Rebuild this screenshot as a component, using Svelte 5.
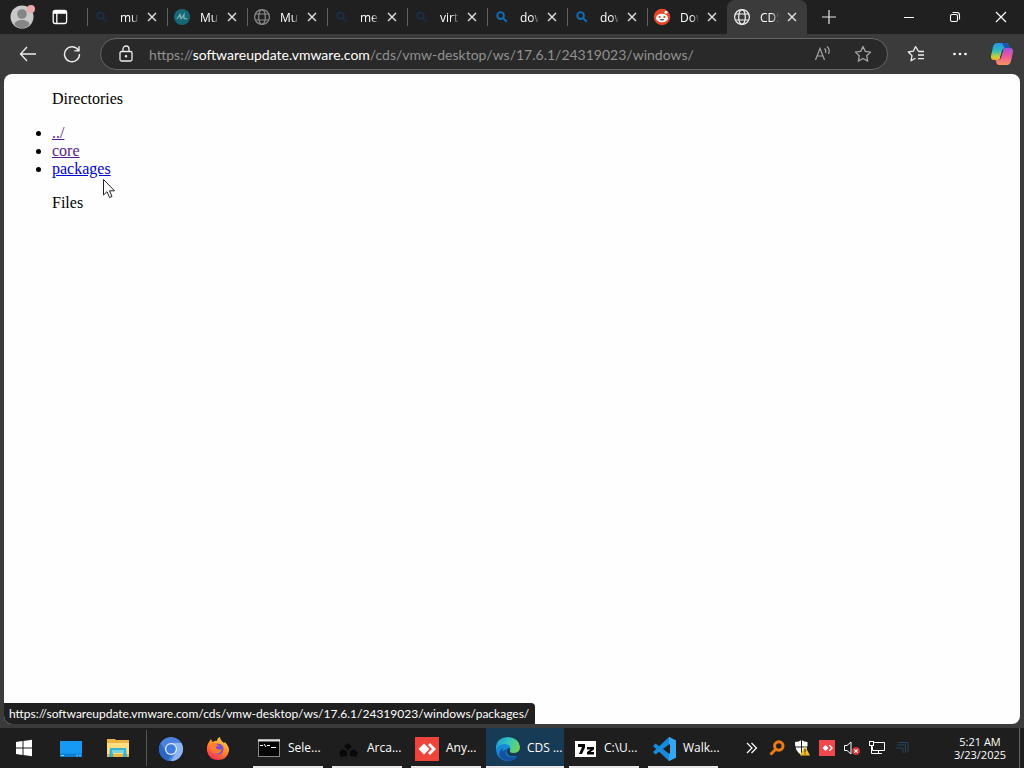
<script>
  const tabs = [
    { icon: 'dim', title: 'mul' },
    { icon: 'arc', title: 'Mul' },
    { icon: 'globe', title: 'Mul' },
    { icon: 'dim', title: 'mer' },
    { icon: 'dim', title: 'virt' },
    { icon: 'search', title: 'dow' },
    { icon: 'search', title: 'dow' },
    { icon: 'reddit', title: 'Dow' },
    { icon: 'globe', title: 'CDS', active: true }
  ];
  const tasks = [
    { icon: 'cmd', title: 'Sele...' },
    { icon: 'arca', title: 'Arca...' },
    { icon: 'any', title: 'Any...' },
    { icon: 'edge', title: 'CDS ...', active: true },
    { icon: 'seven', title: 'C:\\U...' },
    { icon: 'code', title: 'Walk...' }
  ];
  const links = [
    { label: '../', visited: true },
    { label: 'core', visited: true },
    { label: 'packages', visited: false }
  ];
  const url = 'https://softwareupdate.vmware.com/cds/vmw-desktop/ws/17.6.1/24319023/windows/';
</script>

<div class="screen">
  <header class="strip">
    <button class="profile" aria-label="Profile">
      <svg width="26" height="26" viewBox="0 0 26 26">
        <circle cx="13" cy="14" r="11.5" fill="#c9c9c7" />
        <circle cx="13" cy="11" r="4.8" fill="#858585" />
        <path d="M5.5 21.5c0-6 15-6 15 0-4 5-11 5-15 0z" fill="#858585" />
        <circle cx="22" cy="6" r="4" fill="#eea7ac" />
      </svg>
    </button>
    <button class="workspace" aria-label="Tab actions">
      <svg width="16" height="16" viewBox="0 0 16 16" fill="none" stroke="#fff" stroke-width="1.3">
        <rect x="1.2" y="1.5" width="13.4" height="13" rx="2.2" />
        <path d="M1.5 3.3h13" stroke-width="3" /><path d="M4.8 4v10.5" />
      </svg>
    </button>
    <nav class="tabs" aria-label="Tabs">
      {#each tabs as tab}
        <div class="tab" class:active={tab.active}>
          <button class="tab-main">
            <svg class="tab-icon" width="18" height="18" viewBox="0 0 18 18" fill="none">
              {#if tab.icon === 'globe'}
                <g stroke={tab.active ? '#f2f2f2' : '#8b8b8b'} stroke-width="1.2">
                  <circle cx="9" cy="9" r="7.4" /><ellipse cx="9" cy="9" rx="3.3" ry="7.4" />
                  <path d="M2.4 6h13.2M2.4 12h13.2" />
                </g>
              {:else if tab.icon === 'reddit'}
                <circle cx="9" cy="9" r="8.2" fill="#e8482a" />
                <circle cx="13" cy="4.2" r="1.5" fill="#fff" />
                <ellipse cx="9" cy="10" rx="6" ry="4.3" fill="#fff" />
                <circle cx="6.6" cy="9" r="1.1" fill="#d63b21" /><circle cx="11.4" cy="9" r="1.1" fill="#d63b21" />
                <path d="M6.4 11.3q2.6 2.5 5.2 0z" fill="#222" />
              {:else if tab.icon === 'arc'}
                <circle cx="9" cy="9" r="8" fill="#176875" />
                <path d="M4 11l3-4.5 1 4.5M8 11l3-4.5v4l3 .4" stroke="#78b0b5" stroke-width="1.3" />
              {:else}
                <g stroke={tab.icon === 'search' ? '#1268b2' : '#17324c'} stroke-width={tab.icon === 'search' ? 2 : 1.5}>
                  <circle cx="7.6" cy="7.6" r="3.3" /><path d="M10.2 10.2l3.6 3.6" />
                </g>
              {/if}
            </svg>
            <span class="tab-title">{tab.title}</span>
          </button>
          <button class="tab-close" aria-label="Close tab">
            <svg width="10" height="10" viewBox="0 0 10 10" stroke="#e4e4e4" stroke-width="1.4"><path d="M1 1l8 8M9 1l-8 8" /></svg>
          </button>
        </div>
      {/each}
    </nav>
    <button class="new-tab" aria-label="New tab">
      <svg width="14" height="14" viewBox="0 0 14 14" stroke="#e8e8e8" stroke-width="1.2"><path d="M7 0v14M0 7h14" /></svg>
    </button>
    <div class="window-controls">
      <button aria-label="Minimize"><svg width="12" height="12" viewBox="0 0 12 12" stroke="#fff"><path d="M1 6.5h10" /></svg></button>
      <button aria-label="Restore">
        <svg width="12" height="12" viewBox="0 0 12 12" fill="none" stroke="#fff" stroke-width="1.1">
          <rect x="1.5" y="3.5" width="7" height="7" rx="1.5" /><path d="M3.5 1.5H8q2.5 0 2.5 2.5v4.5" />
        </svg>
      </button>
      <button aria-label="Close"><svg width="12" height="12" viewBox="0 0 12 12" stroke="#fff" stroke-width="1.2"><path d="M1 1l10 10M11 1L1 11" /></svg></button>
    </div>
  </header>

  <div class="toolbar">
    <button class="nav-button" aria-label="Back">
      <svg width="18" height="16" viewBox="0 0 18 16" fill="none" stroke="#eee" stroke-width="1.3"><path d="M8 1L1.5 8 8 15M1.5 8H17" /></svg>
    </button>
    <button class="nav-button" aria-label="Refresh">
      <svg width="18" height="18" viewBox="0 0 18 18" fill="none" stroke="#eee" stroke-width="1.4"><path d="M15.5 5.5A7.5 7.5 0 1 0 16.5 9M16 1.2v4.7h-4.7" /></svg>
    </button>
    <div class="address">
      <button class="lock" aria-label="View site information">
        <svg width="16" height="18" viewBox="0 0 16 18" fill="none" stroke="#eee" stroke-width="1.3">
          <rect x="2" y="6.5" width="12" height="9.5" rx="1.5" /><path d="M5 6.5V4a3 3 0 0 1 6 0v2.5" /><circle cx="8" cy="11.2" r=".6" fill="#eee" />
        </svg>
      </button>
      <div class="url-box">
        <input type="text" aria-label="Address and search bar" value={url} spellcheck="false" />
        <div class="url-view" aria-hidden="true">https://<b>softwareupdate.vmware.com</b>/cds/vmw-desktop/ws/17.6.1/24319023/windows/</div>
      </div>
      <button class="address-button" aria-label="Read aloud">
        <svg width="18" height="18" viewBox="0 0 18 18" fill="none" stroke="#a4a4a4" stroke-width="1.2">
          <path d="M1.5 15L6 3.5 10.5 15M3.2 11h5.7M10.5 3.5q2 1.7 1 4.5M13 1.5q3.500 3 1.5 7.5" />
        </svg>
      </button>
      <button class="address-button" aria-label="Add to favorites">
        <svg width="18" height="18" viewBox="0 0 18 18" fill="none" stroke="#a4a4a4" stroke-width="1.3" stroke-linejoin="round">
          <path d="M9 1.5l2.3 4.9 5.3.7-3.9 3.7 1 5.3L9 13.5l-4.7 2.6 1-5.3L1.4 7.1l5.3-.7z" />
        </svg>
      </button>
    </div>
    <div class="tools">
      <button class="nav-button" aria-label="Favorites">
        <svg width="18" height="18" viewBox="0 0 18 18" fill="none" stroke="#eee" stroke-width="1.3" stroke-linejoin="round">
          <path d="M17 6.5h-5.3L8.5 1.7 6.3 6.2 1.3 7l3.7 3.6-1 5.2 4.5-2.5M11 10h6M11 13.7h6" />
        </svg>
      </button>
      <button class="nav-button" aria-label="Settings and more">
        <svg width="16" height="4" viewBox="0 0 16 4" fill="#fff"><circle cx="2.5" cy="2" r="1.3" /><circle cx="8" cy="2" r="1.3" /><circle cx="13.5" cy="2" r="1.3" /></svg>
      </button>
      <button class="nav-button" aria-label="Copilot">
        <svg width="24" height="24" viewBox="0 0 24 24">
          <defs>
            <linearGradient id="cop-a" x1="0" y1="0" x2="0" y2="1"><stop offset="0" stop-color="#2196e8" /><stop offset=".45" stop-color="#30b9bd" /><stop offset=".8" stop-color="#c4cf3f" /><stop offset="1" stop-color="#f2a52e" /></linearGradient>
            <linearGradient id="cop-b" x1="0" y1="0" x2="0" y2="1"><stop offset="0" stop-color="#a052db" /><stop offset=".5" stop-color="#ec5998" /><stop offset="1" stop-color="#fa9461" /></linearGradient>
          </defs>
          <path d="M7 1h9q2 0 2.5 2l1 3h-4q-2 0-2.5 2l-3 9q-.6 1-2.5 1H4q-3.500 0-3-4L3 5q1-4 4-4z" fill="url(#cop-a)" />
          <path d="M12 1h4q2 0 2.5 2l1 3h-5z" fill="#1c55b7" />
          <path d="M15.5 6H20q3.500 0 3 4l-2 9q-1 4-4 4H9q-2 0-2.500-2l-1-3H8q2 0 2.5-1l2.500-9q.7-2 2.500-2z" fill="url(#cop-b)" />
          <path d="M12.5 7.500h1l-2.700 8.500h-1z" fill="#34313b" />
        </svg>
      </button>
    </div>
  </div>

  <div class="frame">
    <main class="page">
      <p>Directories</p>
      <ul>
        {#each links as link}
          <li><a href={'#' + link.label} class:visited={link.visited}>{link.label}</a></li>
        {/each}
      </ul>
      <p>Files</p>
      <svg class="pointer" width="14" height="21" viewBox="0 0 14 21"><path d="M1.5 1.5v15.500l3.500-3.300 2.600 5.800 2.400-1-2.500-5.700h5z" fill="#fff" stroke="#222" /></svg>
    </main>
    <div class="status">https://softwareupdate.vmware.com/cds/vmw-desktop/ws/17.6.1/24319023/windows/packages/</div>
  </div>

  <footer class="taskbar">
    <div class="pinned">
      <button aria-label="Start"><svg width="18" height="18" viewBox="0 0 18 18" fill="#fff"><path d="M1 3l6.500-1v6.500H1zM8.500 1.900L17 .7v7.800H8.500zM1 9.500h6.500V16L1 15zM8.500 9.500H17v7.800l-8.500-1.200z" /></svg></button>
      <button aria-label="Desktop"><svg width="24" height="20" viewBox="0 0 24 20"><rect x="1" y="3" width="22" height="16" fill="#1698f5" /><path d="M1 15.500h22V19H1z" fill="#0b7dd2" /><path d="M2 17.500h3M18 16.500v2M21 16.500v2" stroke="#9edbff" /></svg></button>
      <button aria-label="File Explorer">
        <svg width="24" height="22" viewBox="0 0 24 22"><path d="M1 2h8l1 1h13v17H1z" fill="#ebb445" /><path d="M1 6h22v11H1z" fill="#ffdf80" /><path d="M4 11h16l1 9h-4v-4H7v4H3z" fill="#38b4d0" /><path d="M6 16h12v-3H6z" fill="#7bd4dc" /></svg>
      </button>
      <span class="divider"></span>
      <button aria-label="Chromium">
        <svg width="26" height="26" viewBox="0 0 26 26"><circle cx="13" cy="14" r="12" fill="#4b83de" /><path d="M13 8h10.400A12 12 0 0 1 13 26l5-9z" fill="#8fb5f3" /><path d="M2.600 8L8 17l5 3-3 5.700A12 12 0 0 1 2.600 8z" fill="#2d65c4" /><circle cx="13" cy="14" r="6" fill="#e9f1ff" /><circle cx="13" cy="14" r="4.800" fill="#3e7ce4" /></svg>
      </button>
      <button aria-label="Firefox">
        <svg width="24" height="26" viewBox="0 0 24 26">
          <defs><linearGradient id="fox" x1=".8" y1="0" x2=".3" y2="1"><stop offset="0" stop-color="#ffdc43" /><stop offset=".5" stop-color="#ff8a29" /><stop offset="1" stop-color="#f42c58" /></linearGradient></defs>
          <path d="M3 7l2-3 1.500 3Q10 5 11 6q0-3 3-4 0 3 4 6l1-1q5 6 4 9-2 9-11 9T1 16q-.5-6 2-9z" fill="url(#fox)" />
          <circle cx="12" cy="14" r="5.500" fill="#7650ce" /><path d="M4 9q5-2 9 2-4 0-3 2 2 3 6 1-2 6-8 4-4-3-4-9z" fill="#ff7b2e" />
        </svg>
      </button>
    </div>
    <div class="tasks">
      {#each tasks as task}
        <button class="task" class:current={task.active}>
          <svg width="26" height="26" viewBox="0 0 26 26">
            {#if task.icon === 'cmd'}
              <rect x="2.500" y="3.500" width="21" height="17" fill="#050505" stroke="#8a8a8a" /><path d="M2 4.500h22" stroke="#ddd" stroke-width="2" /><path d="M4 9.500h3M8 8l2 3M11 9.500h3M15 11.500h5" stroke="#fff" />
            {:else if task.icon === 'arca'}
              <path d="M13 7l4 3.500-4 4-4-4zM7 13l5 2v5l-6 1-2-4zM19 13l4 4-2 4-6-1v-5z" fill="#080909" />
            {:else if task.icon === 'any'}
              <rect x="1" y="1" width="24" height="24" fill="#ef443b" /><path d="M10 7.500l5.500 5.500-5.500 5.500L4.500 13z" fill="#fff" /><path d="M14 9l2-2 6 6-6 6-2-2 4-4z" fill="#fff" />
            {:else if task.icon === 'edge'}
              <defs><linearGradient id="edge-top" x1="0" x2="1" y1=".3" y2=".6"><stop offset="0" stop-color="#249bd5" /><stop offset=".5" stop-color="#35c7bd" /><stop offset="1" stop-color="#70d558" /></linearGradient></defs>
              <path d="M1 14Q0 2 13 1q11 1 12 10 0 6-7 6-4 0-3-3 1-4-4-5-7-1-10 5z" fill="url(#edge-top)" />
              <path d="M1 14q2-5 8-6 6 0 6 4-4 0-3 5 2 5 10 3-4 6-11 5Q2 23 1 14z" fill="#168bd8" />
              <path d="M8 12q-2 7 4 13-6-1-8-6 0-5 4-7zM12 13q-3 7 4 8 4 1 7-2-3 7-11 6-7-4-4-10z" fill="#1254a3" />
            {:else if task.icon === 'seven'}
              <rect x="3" y="5" width="21" height="16" fill="#fff" /><path d="M6 8h7v3.500L10 18H7l3-7H6zM15 11h7v2.500L18.500 16H22v2.500h-7V16l3.500-2.500H15z" fill="#050505" />
            {:else}
              <path d="M18 1l7 3.500v17L18 25 2 10l2.500-2.500L20 19V7L4.500 18.500 2 16z" fill="#178bda" /><path d="M18 1l7 3.500v17L18 25z" fill="#36a6f0" />
              <path d="M19 8v10l-6-5z" fill="#1f1f1f" />
            {/if}
          </svg>
          <span>{task.title}</span>
        </button>
      {/each}
    </div>
    <div class="tray">
      <button aria-label="Show more"><svg width="12" height="14" viewBox="0 0 12 14" fill="none" stroke="#fff" stroke-width="1.2"><path d="M1 2l5 5-5 5M5.500 2l5 5-5 5" /></svg></button>
      <button aria-label="Key manager"><svg width="16" height="16" viewBox="0 0 16 16" fill="none" stroke="#f07a12" stroke-width="3"><circle cx="9.800" cy="6" r="4.200" /><path d="M7 9l-5.500 5.500" /></svg></button>
      <button aria-label="Windows Security">
        <svg width="16" height="16" viewBox="0 0 16 16"><path d="M7.500 0q3 2 6 2 1 9-6 13Q.5 11 1 2q4 0 6.500-2z" fill="#fff" /><path d="M7.500 0v15M1 7h13" stroke="#1c1c1c" /><path d="M11 6l5 9.500H6z" fill="#f1bc28" /><path d="M11 9v3.500M11 13.500v1" stroke="#222" /></svg>
      </button>
      <button aria-label="AnyDesk"><svg width="16" height="16" viewBox="0 0 16 16"><rect width="16" height="16" fill="#ef484c" /><path d="M6.500 5L9.500 8l-3 3-3-3zM9.500 5H11l3 3-3 3H9.500l2.500-3z" fill="#fff" /></svg></button>
      <button aria-label="Volume muted">
        <svg width="18" height="16" viewBox="0 0 18 16"><path d="M1.500 5.500H4l4-3.500v12l-4-3.500H1.500z" fill="none" stroke="#fff" /><circle cx="13" cy="11" r="4" fill="#cc3038" /><path d="M11.300 9.300l3.400 3.400M14.700 9.300l-3.400 3.400" stroke="#fff" stroke-width="1.2" /></svg>
      </button>
      <button aria-label="Network"><svg width="18" height="16" viewBox="0 0 18 16" fill="none" stroke="#fff"><path d="M5.500 2.500h11v8h-12v-4M10.500 10.500v3M7 13.500h7" /><rect x="1.500" y="1.500" width="4" height="4" /><path d="M3.500 5.500v8H7" /></svg></button>
      <button aria-label="Background app"><svg width="16" height="16" viewBox="0 0 16 16" fill="none" stroke="#24465d"><path d="M2.500 5h9v8M4 2.500h10V12M2 8h7v5" /></svg></button>
    </div>
    <button class="clock"><span>5:21 AM</span><span>3/23/2025</span></button>
    <button class="show-desktop" aria-label="Show desktop"></button>
  </footer>
</div>

<style>
  :global(body) { margin: 0; background: #1d1d1d; }
  .screen { display: flex; flex-direction: column; min-height: 100vh; background: #3b3b3b; color: #fff; font-family: "Open Sans", "Noto Sans", sans-serif; font-size: 12px; }
  button { display: flex; align-items: center; justify-content: center; margin: 0; padding: 0; border: 0; background: none; color: inherit; font: inherit; }
  svg { display: block; flex: none; }
  .strip { display: flex; height: 34px; background: #202020; }
  .profile { width: 44px; padding-bottom: 2px; }
  .workspace { width: 32px; }
  .tabs { display: flex; margin-left: 11px; }
  .tab { display: flex; width: 79px; border-left: 1px solid transparent; position: relative; }
  .tab::before { content: ""; position: absolute; left: -1px; top: 8px; height: 18px; width: 1px; background: #626262; }
  .tab.active { background: #3b3b3b; border-radius: 8px 8px 0 0; }
  .tab.active::before { display: none; }
  .tab-main { width: 52px; padding-left: 5px; justify-content: flex-start; gap: 9px; }
  .tab-title { width: 20px; overflow: hidden; white-space: nowrap; text-align: left; mask-image: linear-gradient(90deg, #000 60%, transparent 95%); }
  .tab-close { width: 24px; }
  .new-tab { width: 44px; }
  .window-controls { display: flex; margin-left: auto; }
  .window-controls button { width: 46px; }
  .toolbar { display: flex; height: 40px; align-items: center; padding-left: 6px; }
  .nav-button { width: 44px; height: 32px; }
  .address { display: flex; flex: 1; height: 32px; margin-left: 6px; box-sizing: border-box; border: 1px solid #666; border-radius: 16px; background: #292929; padding: 0 4px 0 9px; }
  .lock { width: 32px; }
  .url-box { position: relative; flex: 1; min-width: 0; margin-left: 7px; font: 14px/32px Lato, "Open Sans", sans-serif; }
  input { box-sizing: border-box; width: 100%; height: 100%; padding: 0; border: 0; outline: 0; background: none; color: transparent; caret-color: #fff; font: inherit; }
  .url-view { position: absolute; inset: 0; overflow: hidden; white-space: nowrap; color: #919191; pointer-events: none; }
  .url-view b { color: #fff; font-weight: 400; }
  .address-button { width: 40px; }
  .tools { display: flex; padding-left: 6px; }
  .frame { position: relative; display: flex; flex: 1; padding: 0 4px 4px; }
  .tools .nav-button:last-child { width: 42px; padding-right: 3px; }
  .page { position: relative; flex: 1; border-radius: 8px; background: #fefefe; color: #000; font: 16px/18px "Liberation Serif", serif; }
  .page p { margin: 16px 0 16px 48px; }
  .page ul { margin: 0; padding-left: 48px; }
  .page a { color: #0000d8; }
  .page a.visited { color: #551a8b; }
  .pointer { position: absolute; left: 98px; top: 104px; }
  .status { position: absolute; left: 4px; bottom: 4px; padding: 0 6px 0 5px; border-radius: 0 4px 0 8px; background: #202020; font-family: Lato, "Open Sans", sans-serif; line-height: 21px; white-space: nowrap; }
  .taskbar { display: flex; height: 40px; background: #1e1e1e; }
  .pinned { display: flex; align-items: center; }
  .pinned button { width: 47px; height: 40px; }
  .divider { width: 1px; height: 36px; margin: 0 0 0 5px; background: #555; }
  .tasks { display: flex; gap: 9px; margin-left: 12px; }
  .task { width: 70px; gap: 6px; padding-left: 3px; justify-content: flex-start; box-sizing: border-box; border-bottom: 2px solid #e8e8e8; white-space: nowrap; }
  .task svg { margin-top: 4px; }
  .task.current { width: 78px; margin: 0 -4px; padding-left: 9px; background: #173b55; }
  .tray { display: flex; margin-left: auto; }
  .tray button { width: 25px; }
  .clock { width: 78px; margin-left: 27px; flex-direction: column; font-size: 11px; line-height: 13px; }
  .show-desktop { width: 5px; border-left: 1px solid #666; }
</style>
